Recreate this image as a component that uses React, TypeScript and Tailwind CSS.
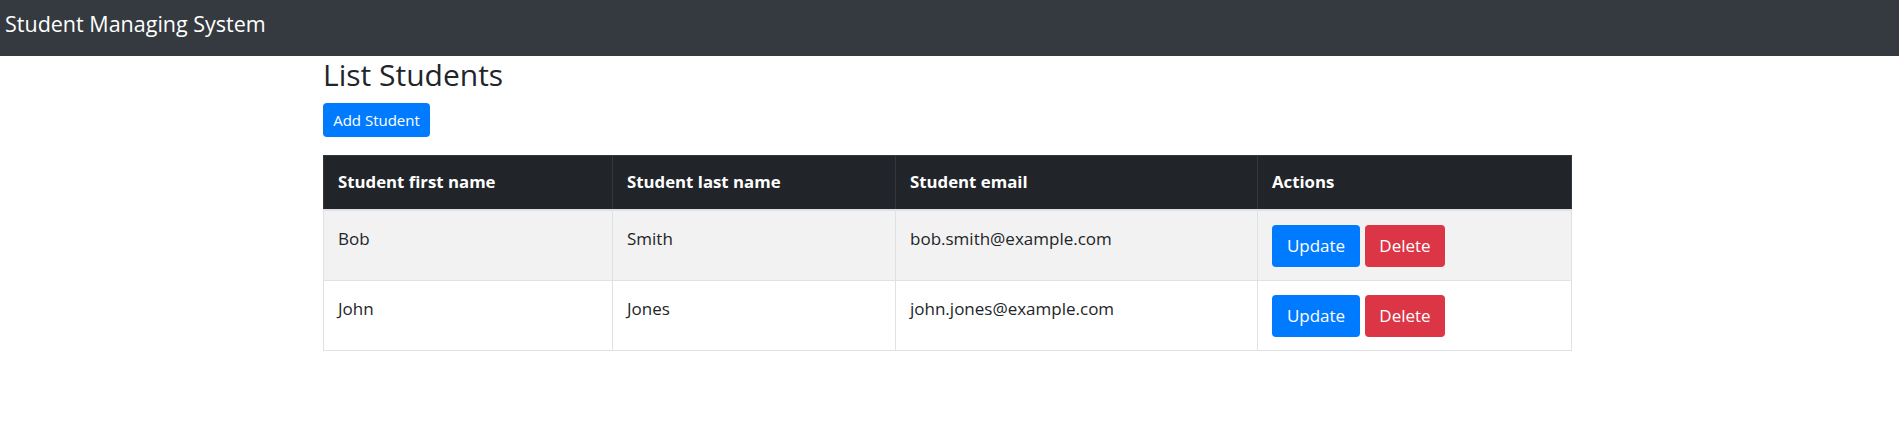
import React from "react";

const students = [
  { first: "Bob", last: "Smith", email: "bob.smith@example.com" },
  { first: "John", last: "Jones", email: "john.jones@example.com" },
];

export default function App() {
  return (
    <div className="min-h-[439px] bg-white text-[#212529] [font-family:'Open_Sans',sans-serif]">
      <nav className="h-[56px] bg-[#343a40] pl-[5px] pt-[8px]">
        <span className="text-[21.5px] leading-[1.5] text-white">Student Managing System</span>
      </nav>
      <main className="ml-[323px] w-[1248px]">
        <h2 className="text-[30px] leading-[38px] font-medium">List Students</h2>
        <button className="mt-[9px] h-[34px] w-[107px] rounded-[4px] bg-[#007bff] text-[15px] leading-[24px] text-white">
          Add Student
        </button>
        <table className="mt-[18px] w-[1248px] table-fixed border-collapse">
          <colgroup>
            <col className="w-[289px]" />
            <col className="w-[283px]" />
            <col className="w-[362px]" />
            <col className="w-[314px]" />
          </colgroup>
          <thead>
            <tr className="bg-[#212529] text-white">
              {["Student first name", "Student last name", "Student email", "Actions"].map((h) => (
                <th
                  key={h}
                  className="h-[54px] border border-[#32383e] border-b-2 border-b-[#dee2e6] px-[14px] text-left align-middle text-[16.8px] font-bold leading-[24px]"
                >
                  {h}
                </th>
              ))}
            </tr>
          </thead>
          <tbody>
            {students.map((s, i) => (
              <tr key={s.email} className={i % 2 === 0 ? "bg-[#f2f2f2]" : "bg-white"}>
                <td className="border border-[#dee2e6] px-[14px] pt-[14px] pb-[13px] align-top text-[17px] leading-[27px]">{s.first}</td>
                <td className="border border-[#dee2e6] px-[14px] pt-[14px] pb-[13px] align-top text-[17px] leading-[27px]">{s.last}</td>
                <td className="border border-[#dee2e6] px-[14px] pt-[14px] pb-[13px] align-top text-[17px] leading-[27px]">{s.email}</td>
                <td className="border border-[#dee2e6] px-[14px] pt-[14px] pb-[13px] align-top">
                  <div className="flex gap-[5px]">
                    <button className="h-[42px] w-[88px] rounded-[4px] bg-[#007bff] text-[17px] leading-[27px] text-white">Update</button>
                    <button className="h-[42px] w-[80px] rounded-[4px] bg-[#dc3545] text-[17px] leading-[27px] text-white">Delete</button>
                  </div>
                </td>
              </tr>
            ))}
          </tbody>
        </table>
      </main>
    </div>
  );
}
